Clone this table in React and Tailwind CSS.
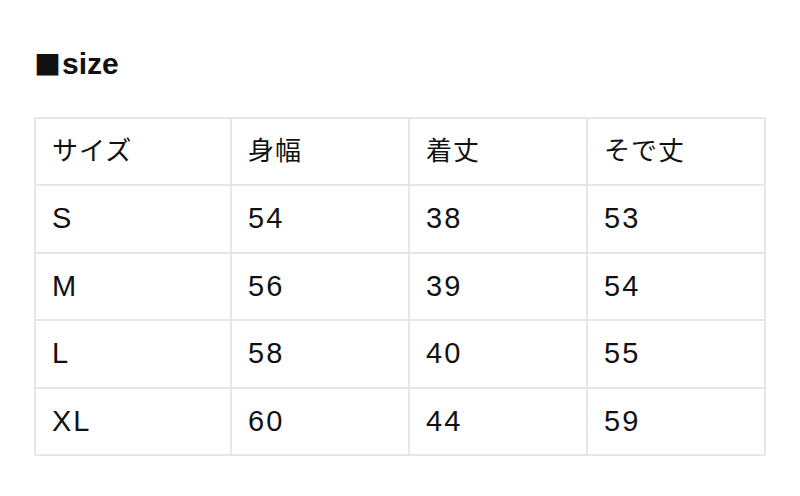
import React from 'react';

const rows = [
  ['サイズ', '身幅', '着丈', 'そで丈'],
  ['S', '54', '38', '53'],
  ['M', '56', '39', '54'],
  ['L', '58', '40', '55'],
  ['XL', '60', '44', '59'],
];

const heights = ['h-[65px]', 'h-[66px]', 'h-[65px]', 'h-[66px]', 'h-[65px]'];

export default function App() {
  return (
    <div
      className="w-[800px] h-[496px] bg-white px-[34px] pt-[46px] text-[#111]"
      style={{ fontFamily: '"Liberation Sans", "Noto Sans CJK JP", sans-serif' }}
    >
      <h2 className="text-[30px] font-bold leading-[40px] h-[40px] mb-[31px] flex items-end pb-[7px]">
        <span
          className="text-[27px] leading-none mr-[1px] -translate-y-[2px]"
          style={{ fontFamily: '"Noto Sans CJK JP", sans-serif' }}
        >
          ■
        </span>
        <span className="leading-none">size</span>
      </h2>
      <div className="grid grid-cols-[194px_176px_176px_176px] gap-[2px] p-[2px] bg-[#e6e6e6] w-[732px]">
        {rows.map((row, i) =>
          row.map((cell, j) => (
            <div
              key={`${i}-${j}`}
              className={`bg-white flex items-center pl-4 ${heights[i]} ${
                i === 0 ? 'text-[26px] tracking-[1px]' : 'text-[29px] tracking-[2px]'
              }`}
            >
              {cell}
            </div>
          ))
        )}
      </div>
    </div>
  );
}
